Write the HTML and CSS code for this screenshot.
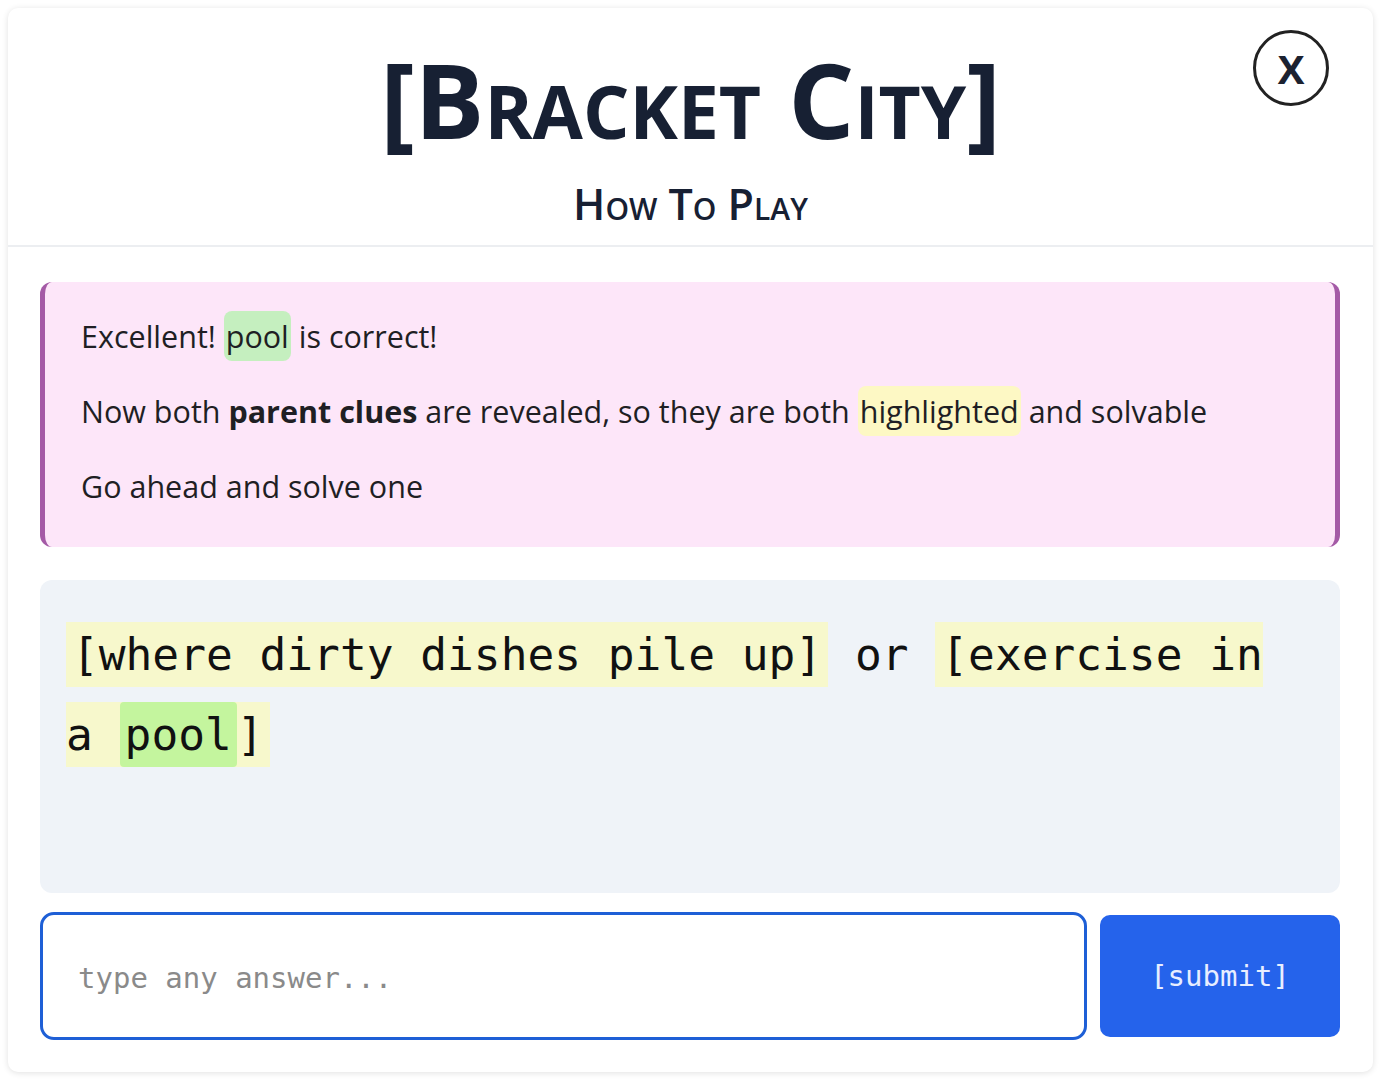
FILE: index.html
```html
<!DOCTYPE html>
<html lang="en">

<head>
    <meta charset="UTF-8">
    <meta name="viewport" content="width=device-width, initial-scale=1.0">
    <title>Bracket City - How To Play</title>
    <link rel="stylesheet" href="styles.css">
</head>

<body>

    <div class="card">
        <div class="header">
            <h1 class="title">[Bracket City]</h1>
            <h2 class="subtitle">How To Play</h2>
            <button class="close" id="close">X</button>
        </div>

        <div class="content">
            <div class="tutorial">
                <p>Excellent! <span class="hl-green">pool</span> is correct!</p>
                <p>Now both <strong>parent clues</strong> are revealed, so they are both <span class="hl-yellow">highlighted</span> and solvable</p>
                <p>Go ahead and solve one</p>
            </div>

            <div class="puzzle">
                <span class="clue">[where dirty dishes pile up]</span> or <span class="clue">[exercise in a <span class="solved">pool</span>]</span>
            </div>

            <div class="answer-row">
                <input class="answer" type="text" placeholder="type any answer..." autofocus>
                <button class="submit" id="submit">[submit]</button>
            </div>
        </div>
    </div>

</body>

</html>
```

FILE: styles.css
```css
body {
    margin: 0;
    padding: 8px;
    background-color: #fff;
    font-family: "Open Sans", "Noto Sans", sans-serif;
    color: #1f1f24;
}

.card {
    display: flex;
    flex-direction: column;
    height: 1064px;
    box-sizing: border-box;
    background-color: #fff;
    border-radius: 10px;
    box-shadow: 0 1px 6px rgba(0, 0, 0, 0.12);
}

.header {
    position: relative;
    height: 240px;
    box-sizing: border-box;
    padding-top: 32px;
    text-align: center;
    border-bottom: 2px solid #eceef1;
    color: #172033;
}

.title {
    margin: 0;
    font-size: 104px;
    line-height: 118px;
    font-weight: 700;
    font-variant: small-caps;
}

.subtitle {
    margin: 21px 0 0;
    font-size: 43px;
    line-height: 50px;
    font-weight: 600;
    font-variant: small-caps;
}

.close {
    position: absolute;
    top: 22px;
    right: 44px;
    width: 76px;
    height: 76px;
    border: 3px solid #222;
    border-radius: 50%;
    background: #fff;
    font-family: "Open Sans", sans-serif;
    font-size: 40px;
    font-weight: 700;
    color: #1c2230;
    cursor: pointer;
    padding: 0;
}

.content {
    display: flex;
    flex-direction: column;
    padding: 35px 33px 32px 32px;
    flex: 1;
}

.tutorial {
    background-color: #fde6f9;
    border-left: 5px solid #a45aa6;
    border-right: 5px solid #a45aa6;
    border-radius: 12px;
    padding: 22px 36px 28px;
    font-size: 30.5px;
    line-height: 45px;
}

.tutorial p {
    margin: 10px 0;
}

.tutorial p + p {
    margin-top: 30px;
}

.tutorial strong {
    font-weight: 700;
}

.hl-green {
    background-color: #c5efbf;
    border-radius: 8px;
    padding: 4px 2px;
}

.hl-yellow {
    background-color: #fdf8c4;
    border-radius: 8px;
    padding: 4px 2px;
}

.puzzle {
    margin-top: 33px;
    height: 313px;
    box-sizing: border-box;
    background-color: #eff3f8;
    border-radius: 12px;
    padding: 35px 44px 38px 26px;
    font-family: "DejaVu Sans Mono", monospace;
    font-size: 44.5px;
    line-height: 80px;
    color: #111;
}

.clue {
    background-color: #f7f8cc;
    padding: 7px 6px;
}

.solved {
    background-color: #c4f59e;
    padding: 7px 5px;
    border-radius: 4px;
}

.answer-row {
    display: flex;
    gap: 13px;
    margin-top: 19px;
    align-items: center;
}

.answer {
    flex: 1;
    height: 128px;
    box-sizing: border-box;
    border: 3px solid #1e5fd6;
    border-radius: 14px;
    padding: 4px 35px 0;
    font-family: "DejaVu Sans Mono", monospace;
    font-size: 29px;
    outline: none;
    color: #222;
}

.answer::placeholder {
    color: #8a8a8a;
}

.submit {
    width: 240px;
    height: 122px;
    border: none;
    border-radius: 10px;
    background-color: #2563eb;
    color: #e8eeff;
    font-family: "DejaVu Sans Mono", monospace;
    font-size: 29px;
    cursor: pointer;
}
```
